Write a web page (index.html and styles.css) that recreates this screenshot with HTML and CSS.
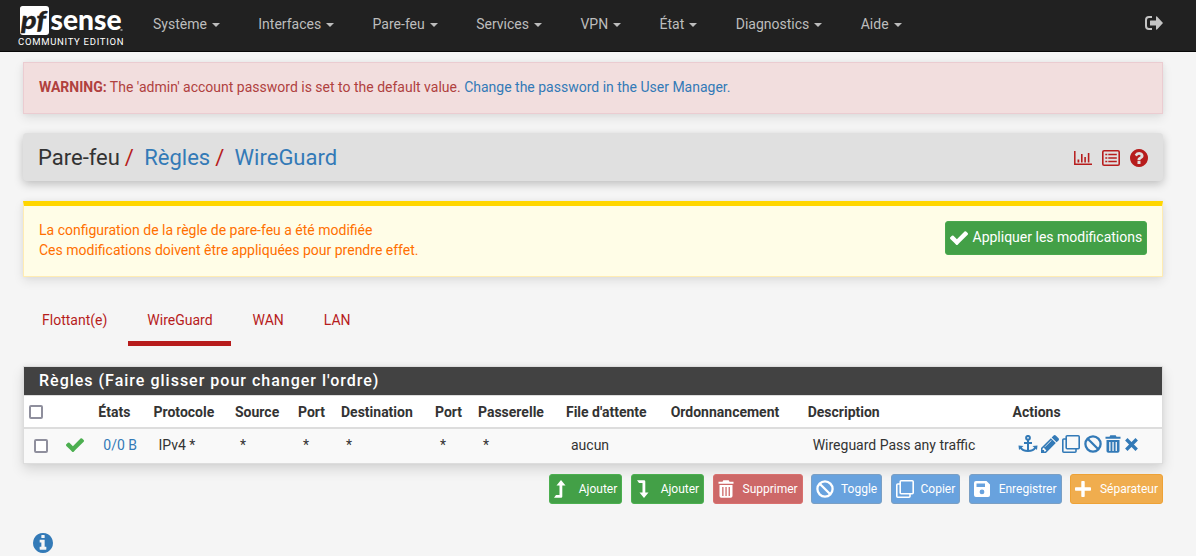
FILE: index.html
```html
<!DOCTYPE html>
<html lang="fr">
<head>
<meta charset="utf-8">
<title>pfSense - Pare-feu: Règles: WireGuard</title>
<link rel="stylesheet" href="styles.css">
</head>
<body>
<svg class="defs" aria-hidden="true">
  <symbol id="check" viewBox="121 315 1550 1207"><path d="M1671 566q0 40-28 68l-724 724-136 136q-28 28-68 28t-68-28l-136-136-362-362q-28-28-28-68t28-68l136-136q28-28 68-28t68 28l294 295 656-657q28-28 68-28t68 28l136 136q28 28 28 68z"/></symbol>
  <symbol id="ban" viewBox="0 0 18 18"><g fill="none" stroke="currentColor" stroke-width="2.3"><circle cx="9" cy="9" r="7.6"/><path d="M3.7 3.7l10.6 10.6"/></g></symbol>
  <symbol id="clone" viewBox="0 0 18 18"><g fill="none" stroke="currentColor" stroke-width="1.6" stroke-linejoin="round"><rect x="4.2" y=".8" width="13" height="13" rx="1"/><path d="M4 4H1.8q-1 0-1 1v11.200q0 1 1 1H13q1 0 1-1V14"/></g></symbol>
  <symbol id="trash" viewBox="0 0 16 18"><path fill-rule="evenodd" d="M.5 1.700H4.500L5.300.3h5.400l.8 1.400h4v2.100H.5zM1.500 5h13v11q0 1.800-1.800 1.800H3.300q-1.800 0-1.800-1.800zm2.700 2v9h1.300V7zm3.200 0v9h1.300V7zm3.200 0v9h1.300V7z"/></symbol>
</svg>

<header class="navbar">
  <svg class="logo" viewBox="0 -6 108 52">
    <path fill="#fff" d="M4.500 0H28q3 0 3 3v23q0 3-3 3H5q-3 0-3-3V2.500Q2 0 4.500 0z"/>
    <text class="logo-pf" x="3" y="22.500" textLength="25" lengthAdjust="spacingAndGlyphs">pf</text>
    <text class="logo-sense" x="32.500" y="24" textLength="71" lengthAdjust="spacingAndGlyphs">sense</text>
    <rect x="102.500" y="23" width="2" height="2" fill="#888"/>
    <text class="logo-edition" x="0" y="39" textLength="105.500">COMMUNITY EDITION</text>
  </svg>
  <nav class="menu">
    <a>Système<i class="caret"></i></a><a>Interfaces<i class="caret"></i></a><a>Pare-feu<i class="caret"></i></a><a>Services<i class="caret"></i></a><a>VPN<i class="caret"></i></a><a>État<i class="caret"></i></a><a>Diagnostics<i class="caret"></i></a><a>Aide<i class="caret"></i></a>
  </nav>
  <svg class="signout" viewBox="0 0 18 14"><path fill="none" stroke="#c4c4c4" stroke-width="2" d="M7 1H4Q1 1 1 4v6q0 3 3 3h3"/><path fill="#c4c4c4" d="M5.500 4.500H11V1q0-1 1-.5l6 6.500-6 6.500q-1 .5-1-.5V9.500H5.500q-.5 0-.5-.5V5q0-.5.5-.5z"/></svg>
</header>

<main class="container">
  <div class="alert danger"><span><b>WARNING:</b> The 'admin' account password is set to the default value. <a>Change the password in the User Manager.</a></span></div>

  <div class="titlebar">
    <div class="crumbs"><span>Pare-feu</span><i>/</i><a>Règles</a><i>/</i><a>WireGuard</a></div>
    <div class="tools">
      <svg width="18" height="14" viewBox="0 0 18 14"><path fill="none" stroke="currentColor" stroke-width="1.500" d="M.8 0v13.200H18"/><path fill="currentColor" d="M3.500 8.500h1.800v3H3.500zM7 3h1.600v8.500H7zM10.300 6h1.600v5.500h-1.600zM13.800 2h1.600v9.500h-1.600z"/></svg>
      <svg width="18" height="16" viewBox="0 0 18 16"><rect x=".8" y=".8" width="16.400" height="14.400" rx="1.300" fill="none" stroke="currentColor" stroke-width="1.600"/><path fill="none" stroke="currentColor" stroke-width="1.700" d="M3.300 4.500h2M6.300 4.500h8.500M3.300 8h2M6.300 8h8.500M3.300 11.500h2M6.300 11.500h8.500"/></svg>
      <svg width="18" height="18" viewBox="128 128 1536 1536"><path fill="currentColor" d="M1024 1376v-192q0-14-9-23t-23-9h-192q-14 0-23 9t-9 23v192q0 14 9 23t23 9h192q14 0 23-9t9-23zm256-672q0-88-55.500-163t-138.500-116-170-41q-243 0-371 213-15 24 8 42l132 100q7 6 19 6 16 0 25-12 53-68 86-92 34-24 86-24 48 0 85.500 26t37.500 59q0 38-20 61t-68 45q-63 28-115.500 86.500t-52.500 125.500v36q0 14 9 23t23 9h192q14 0 23-9t9-23q0-19 21.500-49.500t54.500-49.500q32-18 49-28.500t46-35 44.500-48 28-60.500 12.500-81zm384 192q0 209-103 385.500t-279.500 279.500-385.500 103-385.500-103-279.500-279.500-103-385.500 103-385.500 279.500-279.500 385.500-103 385.500 103 279.500 279.500 103 385.500z"/></svg>
    </div>
  </div>

  <div class="alert warning">
    <p>La configuration de la règle de pare-feu a été modifiée<br>Ces modifications doivent être appliquées pour prendre effet.</p>
    <button class="apply"><svg width="18" height="14"><use href="#check"/></svg>Appliquer les modifications</button>
  </div>

  <nav class="tabs"><a>Flottant(e)</a><a class="active">WireGuard</a><a>WAN</a><a>LAN</a></nav>

  <section class="panel">
    <h2>Règles (Faire glisser pour changer l'ordre)</h2>
    <div class="row head">
      <span class="box"></span><span></span><span>États</span><span>Protocole</span><span>Source</span><span>Port</span><span>Destination</span><span>Port</span><span>Passerelle</span><span>File d'attente</span><span>Ordonnancement</span><span>Description</span><span>Actions</span>
    </div>
    <div class="row rule">
      <span class="box"></span><svg class="pass" width="18" height="14"><use href="#check"/></svg><a>0/0 B</a><span>IPv4 *</span><span>*</span><span>*</span><span>*</span><span>*</span><span>*</span><span>aucun</span><span></span><span>Wireguard Pass any traffic</span>
      <span class="actions">
        <svg width="20" height="18" viewBox="0 0 20 18"><g fill="none" stroke="currentColor" stroke-width="2"><circle cx="10" cy="2.800" r="1.900"/><path d="M10 4.700V16M6 8h8M2.500 12.500Q4.500 16 10 16t7.500-3.500"/></g><path fill="currentColor" d="M.5 10.500l5 .5-4.500 4zM19.500 10.500l-5 .5 4.500 4z"/></svg>
        <svg width="18" height="18" viewBox="128 149 1515 1515"><path fill="currentColor" d="M491 1536l91-91-235-235-91 91v107h128v128h107zm523-928q0-22-22-22-10 0-17 7l-542 542q-7 7-7 17 0 22 22 22 10 0 17-7l542-542q7-7 7-17zm-54-192l416 416-832 832h-416v-416zm683 96q0 53-37 90l-166 166-416-416 166-165q36-38 90-38 53 0 91 38l235 234q37 39 37 91z"/></svg>
        <svg width="18" height="18"><use href="#clone"/></svg>
        <svg width="18" height="18"><use href="#ban"/></svg>
        <svg width="16" height="18"><use href="#trash"/></svg>
        <svg width="13" height="13" viewBox="0 0 13 13"><path stroke="currentColor" stroke-width="3.400" d="M1.300 1.300l10.400 10.400M11.700 1.300L1.300 11.700"/></svg>
      </span>
    </div>
  </section>

  <div class="buttons">
    <button class="green"><span class="ico"><svg width="12" height="18" viewBox="0 0 12 18"><path d="M7 0l4.500 5.500H8.300V16.500q0 1.200-1.200 1.200H0l2-2.700h3.500V5.500H2.500z"/></svg></span>Ajouter</button>
    <button class="green wide"><span class="ico"><svg width="12" height="18" viewBox="0 0 12 18"><path d="M7 18l4.500-5.500H8.300V1.500Q8.300.3 7.100.3H0L2 3h3.500v9.500H2.500z"/></svg></span>Ajouter</button>
    <button class="red"><span class="ico"><svg width="16" height="18"><use href="#trash"/></svg></span>Supprimer</button>
    <button class="blue"><span class="ico"><svg width="18" height="18"><use href="#ban"/></svg></span>Toggle</button>
    <button class="blue"><span class="ico"><svg width="18" height="18"><use href="#clone"/></svg></span>Copier</button>
    <button class="blue"><span class="ico"><svg width="16" height="16" viewBox="0 0 16 16"><path fill-rule="evenodd" d="M2 0h10.500L16 3.500V14q0 2-2 2H2q-2 0-2-2V2Q0 0 2 0zm.5 2.500V6H11V2.500zM8 8.500a2.400 2.400 0 100 4.800 2.400 2.400 0 000-4.800z"/></svg></span>Enregistrer</button>
    <button class="orange"><span class="ico"><svg width="16" height="16" viewBox="0 0 16 16"><path d="M7 0h2q.7 0 .7.700v5.600h5.600q.7 0 .7.700v2q0 .7-.7.700H9.700v5.600q0 .7-.7.700H7q-.7 0-.7-.7V9.700H.7Q0 9.700 0 9V7q0-.7.7-.7h5.600V.7Q6.300 0 7 0z"/></svg></span>Séparateur</button>
  </div>

  <svg class="info" viewBox="128 128 1536 1536"><path d="M1152 1376v-160q0-14-9-23t-23-9h-96v-512q0-14-9-23t-23-9h-320q-14 0-23 9t-9 23v160q0 14 9 23t23 9h96v320h-96q-14 0-23 9t-9 23v160q0 14 9 23t23 9h448q14 0 23-9t9-23zm-128-896v-160q0-14-9-23t-23-9h-192q-14 0-23 9t-9 23v160q0 14 9 23t23 9h192q14 0 23-9t9-23zm640 416q0 209-103 385.500t-279.500 279.500-385.500 103-385.500-103-279.500-279.500-103-385.500 103-385.500 279.500-279.500 385.500-103 385.500 103 279.500 279.500 103 385.500z"/></svg>
</main>
</body>
</html>
```
FILE: styles.css
```css
* { box-sizing: border-box; }
body { margin: 0; height: 556px; overflow: hidden; background: #f5f5f5; color: #333; font: 14px/20px Roboto, sans-serif; }
a { color: #337ab7; }
i { font-style: normal; }
svg { display: block; flex: none; }
.defs { display: none; }

.navbar { display: flex; height: 52px; background: #212121; border-bottom: 1px solid #080808; padding: 0 33px 0 18px; }
.logo { width: 108px; height: 52px; overflow: visible; }
.logo text { fill: #fff; }
.logo .logo-pf { font: italic 900 25px/1 Lato, sans-serif; fill: #212121; stroke: #212121; stroke-width: .3px; }
.logo-sense { font: 900 27.500px/1 Lato, sans-serif; }
.logo-edition { font: 9.500px Roboto, sans-serif; }
.menu { display: flex; gap: 38.450px; margin: 14px auto 0 27px; }
.menu a { display: flex; align-items: center; gap: 5px; height: 20px; color: #bdbdbd; }
.caret { border: 4px solid transparent; border-top-color: #bdbdbd; border-bottom: 0; margin-top: 1px; }
.signout { width: 18px; height: 14px; margin-top: 16px; }

.container { width: 1140px; margin: 10px 0 0 23px; }
.alert { display: flex; box-shadow: 0 4px 10px rgba(0,0,0,.09), 0 0 5px rgba(0,0,0,.05); }
.danger { height: 52px; padding: 14px 15px; border: 1px solid #ebccd1; background: #f2dede; color: #b0413e; }
.titlebar { display: flex; justify-content: space-between; align-items: center; height: 48px; margin-top: 19px; padding: 0 15px; border-radius: 4px; background: #e0e0e0; box-shadow: 0 3px 10px rgba(0,0,0,.23); }
.crumbs { display: flex; margin-top: 1px; font-size: 22px; line-height: 30px; }
.crumbs i { color: #b71c1c; margin: 0 10.400px 0 4.900px; }
.tools { display: flex; align-items: center; gap: 10px; color: #b71c1c; margin-top: 2px; }
.warning { justify-content: space-between; height: 76px; margin-top: 20px; padding: 14px 15px; border: 1px solid #ffecb3; border-top: 5px solid #ffd600; background: #fffde7; color: #ff6f00; }
.warning p { margin: 0; }
button { display: flex; align-items: center; border: 1px solid; border-radius: 3px; color: #fff; font-family: inherit; }
button svg { fill: #fff; }
.apply { height: 34px; width: 202px; margin-top: 1px; padding: 0 4px 2px; gap: 4.500px; background: #43a047; border-color: #49a84d; font-size: 14px; white-space: nowrap; }
.apply svg { margin-top: 2px; }

.tabs { display: flex; height: 49px; margin-top: 20px; }
.tabs a { padding: 13px 21px 0 19px; height: 49px; color: #b71c1c; border-bottom: 5px solid transparent; }
.tabs .active { border-color: #b71c1c; padding: 13px 18.500px 0 19px; }
.tabs a:nth-child(3) { padding: 13px 21px 0 21.500px; }

.panel { height: 98px; margin-top: 20px; border: 1px solid #ddd; background: #fff; box-shadow: 0 6px 12px rgba(0,0,0,.12), 0 0 5px rgba(0,0,0,.06); }
.panel h2 { height: 28px; margin: 0; padding-left: 15px; background: #424242; color: #fff; font-size: 16px; font-weight: 500; line-height: 27px; letter-spacing: 1px; }
.row { display: grid; grid-template-columns: 37px 32.300px 55.200px 81.500px 63px 43px 94px 43px 88px 104.700px 137px 204.900px 1fr; padding-left: 5px; align-items: center; white-space: nowrap; }
.head { height: 34px; border-top: 1px solid #ddd; border-bottom: 2px solid #ddd; font-weight: 700; }
.rule { height: 34px; padding: 0 0 2px 10px; background: #f9f9f9; }
.box { width: 14px; height: 14px; border: 2px solid #8f8f9d; border-radius: 2px; background: #fff; }
.rule .box { margin-top: 2px; }
.pass { fill: #4caf50; margin: -1px 0 0 -5px; }
.actions { display: flex; align-items: center; gap: 3.400px; margin-top: -2px; color: #337ab7; fill: #337ab7; }

.buttons { display: flex; justify-content: flex-end; gap: 8.350px; margin-top: 10px; }
.buttons button { height: 30px; padding: 0 4px 0 0; font-size: 12px; }
.ico { display: flex; width: 29px; padding-left: 4px; }
.wide .ico { padding-left: 5px; }
.green { background: #43a047; border-color: #4caf50; }
.red { background: #cd6868; border-color: #d9706e; }
.blue { background: #68a2de; border-color: #7a9fc4; }
.orange { background: #f0ad4e; border-color: #eea236; }
.info { width: 20px; height: 20px; margin: 29px 0 0 10px; fill: #337ab7; }
```
